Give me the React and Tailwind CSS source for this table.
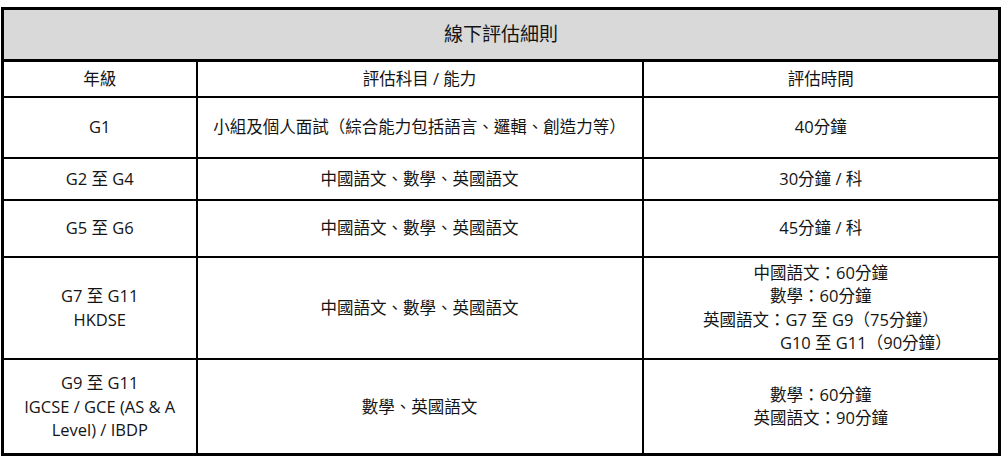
import React from "react";

const FONT = { fontFamily: '"Open Sans", "Noto Sans CJK TC", sans-serif' };

const ROWS = [
  { grade: ["G1"], subject: "小組及個人面試（綜合能力包括語言、邏輯、創造力等）", time: ["40分鐘"], h: "h-[61px]" },
  { grade: ["G2 至 G4"], subject: "中國語文、數學、英國語文", time: ["30分鐘 / 科"], h: "h-[42px]" },
  { grade: ["G5 至 G6"], subject: "中國語文、數學、英國語文", time: ["45分鐘 / 科"], h: "h-[57px]" },
  {
    grade: ["G7 至 G11", "HKDSE"],
    subject: "中國語文、數學、英國語文",
    time: ["中國語文：60分鐘", "數學：60分鐘", "英國語文：G7 至 G9（75分鐘）"],
    extra: "G10 至 G11（90分鐘）",
    h: "h-[102px]",
  },
  {
    grade: ["G9 至 G11", "IGCSE / GCE (AS & A", "Level) / IBDP"],
    subject: "數學、英國語文",
    time: ["數學：60分鐘", "英國語文：90分鐘"],
    h: "h-[96px]",
  },
];

export default function App() {
  return (
    <div className="bg-white w-[1008px] h-[464px] pt-[7px] pl-[1px] text-[#141414]" style={FONT}>
      <table className="w-[1000px] border-collapse border-[3px] border-black table-fixed text-[16.5px] leading-[23.5px]">
        <colgroup>
          <col className="w-[194px]" />
          <col className="w-[446px]" />
          <col />
        </colgroup>
        <tbody>
          <tr className="h-[52px]">
            <td colSpan={3} className="border-[3px] border-black bg-[#d9d9d9] text-center text-[19px] p-0">
              線下評估細則
            </td>
          </tr>
          <tr className="h-[36px]">
            <td className="border-2 border-black text-center p-0">年級</td>
            <td className="border-2 border-black text-center p-0">評估科目 / 能力</td>
            <td className="border-2 border-black text-center p-0">評估時間</td>
          </tr>
          {ROWS.map((row, i) => (
            <tr key={i} className={row.h}>
              <td className="border-2 border-black text-center p-0 px-2">
                {row.grade.map((g) => (
                  <div key={g}>{g}</div>
                ))}
              </td>
              <td className="border-2 border-black text-center p-0">{row.subject}</td>
              <td className="border-2 border-black text-center p-0">
                {row.time.map((t) => (
                  <div key={t}>{t}</div>
                ))}
                {row.extra && <div className="pl-[90px]">{row.extra}</div>}
              </td>
            </tr>
          ))}
        </tbody>
      </table>
    </div>
  );
}
